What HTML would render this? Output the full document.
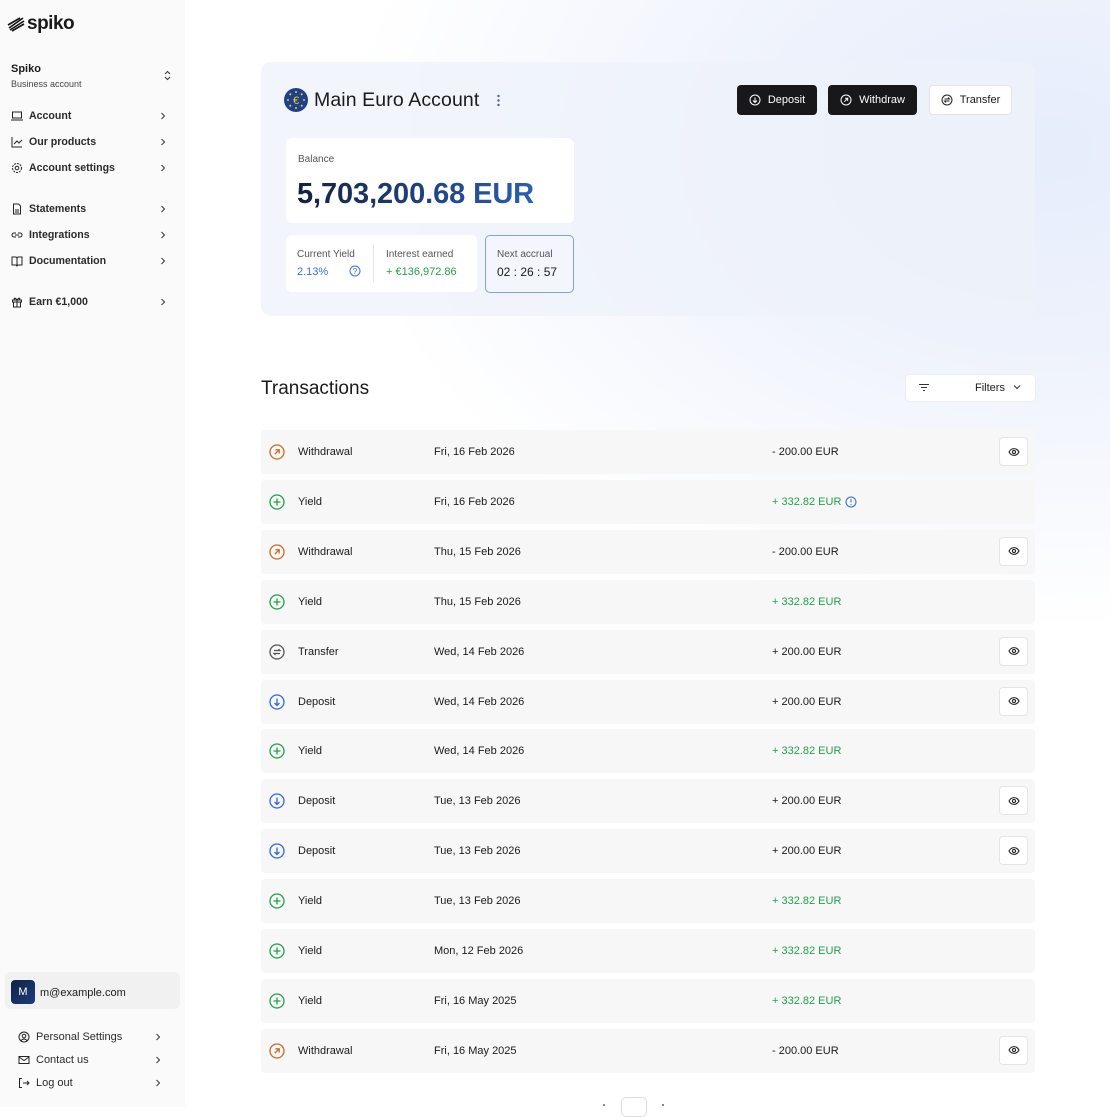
<!DOCTYPE html>
<html><head><meta charset="utf-8"><style>
*{box-sizing:border-box;margin:0;padding:0}
body{width:1110px;height:1107px;overflow:hidden;font-family:"Liberation Sans",sans-serif;color:#1a1a1a;position:relative;background:#fff}
.bg{position:absolute;left:185px;top:0;width:925px;height:1107px;background:radial-gradient(ellipse 700px 480px at 860px 150px,#e6edfb 0%,#eef2fc 40%,rgba(255,255,255,0) 100%)}
.side{position:absolute;left:0;top:0;width:185px;height:1107px;background:#fafafa}
.a{position:absolute}
.nav{position:absolute;left:11px;font-size:10.6px;font-weight:bold;color:#2a2a2a;display:flex;align-items:center;width:162px}
.nav svg{width:12px;height:12px;margin-right:6px}
.nav .ch{margin-left:auto;width:8px;height:8px}
.card{position:absolute;left:261px;top:62px;width:774px;height:254px;background:rgba(238,242,250,.75);border-radius:10px}
.btn{position:absolute;top:85px;height:30px;border-radius:4px;font-size:11px;display:flex;align-items:center;justify-content:center;gap:7px}
.dark{background:#18181b;color:#fff}
.row{position:absolute;left:261px;width:774px;height:44px;background:#f7f7f7;border-radius:4px;font-size:11px}
.row span{position:absolute;top:16px}
.row .ic{position:absolute;left:8px;top:14px}
.eye{position:absolute;left:738px;top:7px;width:29px;height:29px;background:#fff;border:1px solid #e5e5e5;border-radius:4px;display:flex;align-items:center;justify-content:center}
.g{color:#22a04b}
</style></head><body>
<div class="bg"></div>
<div class="side">
 <div class="a" style="left:7px;top:13px;font-size:19px;font-weight:bold;letter-spacing:-.5px;display:flex;align-items:center;gap:2px">
  <svg width="18" height="16" viewBox="0 0 18 16"><path d="M2 12L16 2M1 9L13 2M3 14L17 5M5 15L17 8" stroke="#111" stroke-width="1.6"/></svg>spiko</div>
 <div class="a" style="left:11px;top:63px;font-size:11px;font-weight:bold">Spiko</div>
 <div class="a" style="left:11px;top:79px;font-size:9px;color:#444">Business account</div>
 <svg class="a" style="left:163px;top:70px" width="9" height="11" viewBox="0 0 9 11"><path d="M2 4L4.5 1.5L7 4M2 7L4.5 9.5L7 7" stroke="#333" fill="none"/></svg>
 <div class="nav" style="top:110px"><svg viewBox="0 0 12 12"><rect x="1.5" y="2" width="9" height="6" stroke="#222" fill="none"/><path d="M0 10h12" stroke="#222"/></svg>Account<svg class="ch" viewBox="0 0 8 8"><path d="M2.5 1L5.5 4L2.5 7" stroke="#333" fill="none"/></svg></div>
 <div class="nav" style="top:136px"><svg viewBox="0 0 12 12"><path d="M1 1v10h10M3 8l3-3 2 2 3-3" stroke="#222" fill="none"/></svg>Our products<svg class="ch" viewBox="0 0 8 8"><path d="M2.5 1L5.5 4L2.5 7" stroke="#333" fill="none"/></svg></div>
 <div class="nav" style="top:162px"><svg viewBox="0 0 12 12"><circle cx="6" cy="6" r="4.5" stroke="#222" fill="none" stroke-dasharray="2 1"/><circle cx="6" cy="6" r="1.8" stroke="#222" fill="none"/></svg>Account settings<svg class="ch" viewBox="0 0 8 8"><path d="M2.5 1L5.5 4L2.5 7" stroke="#333" fill="none"/></svg></div>
 <div class="nav" style="top:203px"><svg viewBox="0 0 12 12"><path d="M2.5 1h5l2 2v8h-7z M4 7h4M4 9h4" stroke="#222" fill="none"/></svg>Statements<svg class="ch" viewBox="0 0 8 8"><path d="M2.5 1L5.5 4L2.5 7" stroke="#333" fill="none"/></svg></div>
 <div class="nav" style="top:229px"><svg viewBox="0 0 12 12"><path d="M5 4H3a2 2 0 000 4h2M7 4h2a2 2 0 010 4H7M4 6h4" stroke="#222" fill="none"/></svg>Integrations<svg class="ch" viewBox="0 0 8 8"><path d="M2.5 1L5.5 4L2.5 7" stroke="#333" fill="none"/></svg></div>
 <div class="nav" style="top:255px"><svg viewBox="0 0 12 12"><path d="M1 2h4l1 1 1-1h4v8H7l-1 1-1-1H1zM6 3v8" stroke="#222" fill="none"/></svg>Documentation<svg class="ch" viewBox="0 0 8 8"><path d="M2.5 1L5.5 4L2.5 7" stroke="#333" fill="none"/></svg></div>
 <div class="nav" style="top:296px"><svg viewBox="0 0 12 12"><path d="M1.5 4h9v2h-9zM2.5 6v5h7V6M6 4v7M6 4C4 1 2 2 4 4M6 4c2-3 4-2 2 0" stroke="#222" fill="none"/></svg>Earn €1,000<svg class="ch" viewBox="0 0 8 8"><path d="M2.5 1L5.5 4L2.5 7" stroke="#333" fill="none"/></svg></div>
 <div class="a" style="left:5px;top:972px;width:175px;height:37px;background:#f1f1f2;border-radius:5px"></div>
 <div class="a" style="left:11px;top:980px;width:24px;height:24px;border-radius:4px;background:linear-gradient(135deg,#0f2244,#1c3d7a);color:#fff;font-size:11px;display:flex;align-items:center;justify-content:center">M</div>
 <div class="a" style="left:40px;top:987px;font-size:11px">m@example.com</div>
 <div class="nav" style="left:18px;top:1031px;width:150px;font-weight:normal;font-size:11px"><svg viewBox="0 0 12 12"><circle cx="6" cy="6" r="5" stroke="#222" fill="none"/><circle cx="6" cy="5" r="1.8" stroke="#222" fill="none"/><path d="M3 9.5c2-2 4-2 6 0" stroke="#222" fill="none"/></svg>Personal Settings<svg class="ch" viewBox="0 0 8 8"><path d="M2.5 1L5.5 4L2.5 7" stroke="#333" fill="none"/></svg></div>
 <div class="nav" style="left:18px;top:1054px;width:150px;font-weight:normal;font-size:11px"><svg viewBox="0 0 12 12"><rect x="1" y="2.5" width="10" height="7" stroke="#222" fill="none"/><path d="M1 3l5 3.5L11 3" stroke="#222" fill="none"/></svg>Contact us<svg class="ch" viewBox="0 0 8 8"><path d="M2.5 1L5.5 4L2.5 7" stroke="#333" fill="none"/></svg></div>
 <div class="nav" style="left:18px;top:1077px;width:150px;font-weight:normal;font-size:11px"><svg viewBox="0 0 12 12"><path d="M4 1.5H1.5v9H4M5 6h6M9 4l2 2-2 2" stroke="#222" fill="none"/></svg>Log out<svg class="ch" viewBox="0 0 8 8"><path d="M2.5 1L5.5 4L2.5 7" stroke="#333" fill="none"/></svg></div>
</div>

<div class="card"></div>
<svg class="a" style="left:284px;top:88px" width="24" height="24" viewBox="0 0 24 24"><circle cx="12" cy="12" r="12" fill="#1f3f8f"/><g fill="#f5d000"><circle cx="12" cy="4" r="1"/><circle cx="12" cy="20" r="1"/><circle cx="4" cy="12" r="1"/><circle cx="20" cy="12" r="1"/><circle cx="6.3" cy="6.3" r="1"/><circle cx="17.7" cy="17.7" r="1"/><circle cx="17.7" cy="6.3" r="1"/><circle cx="6.3" cy="17.7" r="1"/></g><text x="12" y="16" font-size="11" text-anchor="middle" fill="#f5d000" font-family="Liberation Sans">€</text></svg>
<div class="a" style="left:314px;top:89px;font-size:19.5px;color:#1a1a1a;letter-spacing:.1px">Main Euro Account</div>
<svg class="a" style="left:496px;top:94px" width="5" height="13"><circle cx="2.5" cy="2" r="1.2" fill="#3a62c4"/><circle cx="2.5" cy="6.5" r="1.2" fill="#3a62c4"/><circle cx="2.5" cy="11" r="1.2" fill="#3a62c4"/></svg>
<div class="btn dark" style="left:737px;width:80px"><svg width="12" height="12" viewBox="0 0 12 12"><circle cx="6" cy="6" r="5" stroke="#fff" fill="none"/><path d="M6 3.5v5M4 6.5l2 2 2-2" stroke="#fff" fill="none"/></svg>Deposit</div>
<div class="btn dark" style="left:828px;width:89px"><svg width="12" height="12" viewBox="0 0 12 12"><circle cx="6" cy="6" r="5" stroke="#fff" fill="none"/><path d="M4.3 7.7l3.4-3.4M5 4.3h2.7V7" stroke="#fff" fill="none"/></svg>Withdraw</div>
<div class="btn" style="left:929px;width:83px;background:#fff;border:1px solid #e4e4e7"><svg width="12" height="12" viewBox="0 0 12 12"><circle cx="6" cy="6" r="5" stroke="#222" fill="none"/><path d="M3.5 5h5L7 3.5M8.5 7h-5L5 8.5" stroke="#222" fill="none"/></svg>Transfer</div>

<div class="a" style="left:286px;top:138px;width:288px;height:85px;background:#fff;border-radius:6px"></div>
<div class="a" style="left:298px;top:154px;font-size:10px;color:#555">Balance</div>
<div class="a" style="left:297px;top:178px;font-size:29px;font-weight:bold;background:linear-gradient(90deg,#13213f,#2a5fb3);-webkit-background-clip:text;color:transparent;letter-spacing:-.1px">5,703,200.68 EUR</div>
<div class="a" style="left:286px;top:235px;width:191px;height:57px;background:#fff;border-radius:6px"></div>
<div class="a" style="left:373px;top:245px;width:1px;height:37px;background:#e5e5e5"></div>
<div class="a" style="left:297px;top:249px;font-size:10px;color:#555">Current Yield</div>
<div class="a" style="left:297px;top:266px;font-size:11px;color:#3a6fd8">2.13%</div>
<svg class="a" style="left:349px;top:265px" width="12" height="12" viewBox="0 0 12 12"><circle cx="6" cy="6" r="5" stroke="#3a6fd8" fill="none"/><text x="6" y="9" font-size="8" text-anchor="middle" fill="#3a6fd8" font-family="Liberation Sans">?</text></svg>
<div class="a" style="left:386px;top:249px;font-size:10px;color:#555">Interest earned</div>
<div class="a g" style="left:386px;top:266px;font-size:11px">+ €136,972.86</div>
<div class="a" style="left:485px;top:235px;width:89px;height:58px;background:#f3f6fc;border:1px solid #8aa2cc;border-radius:5px"></div>
<div class="a" style="left:497px;top:249px;font-size:10px;color:#555">Next accrual</div>
<div class="a" style="left:497px;top:265px;font-size:12px">02 : 26 : 57</div>

<div class="a" style="left:261px;top:378px;font-size:19px">Transactions</div>
<div class="a" style="left:906px;top:375px;width:129px;height:26px;background:#fff;border-radius:4px;box-shadow:0 0 0 1px #eceef2"></div>
<svg class="a" style="left:919px;top:383px" width="10" height="9"><path d="M0 1.5h10M2 4.5h6M4 7.5h2" stroke="#333"/></svg>
<div class="a" style="left:975px;top:382px;font-size:11px">Filters</div>
<svg class="a" style="left:1013px;top:384px" width="8" height="6"><path d="M1 1.5l3 3 3-3" stroke="#333" fill="none"/></svg>

<div id="rows"></div>
<script>
const W='<svg width="16" height="16" viewBox="0 0 16 16"><circle cx="8" cy="8" r="7" stroke="#c96a22" stroke-width="1.3" fill="none"/><path d="M5.8 10.2l4.4-4.4M6.5 5.8h3.7v3.7" stroke="#c96a22" stroke-width="1.3" fill="none"/></svg>';
const Y='<svg width="16" height="16" viewBox="0 0 16 16"><circle cx="8" cy="8" r="7" stroke="#22a04b" stroke-width="1.3" fill="none"/><path d="M8 4.5v7M4.5 8h7" stroke="#22a04b" stroke-width="1.3"/></svg>';
const D='<svg width="16" height="16" viewBox="0 0 16 16"><circle cx="8" cy="8" r="7" stroke="#3566d6" stroke-width="1.3" fill="none"/><path d="M8 4.5v7M5.5 9l2.5 2.5L10.5 9" stroke="#3566d6" stroke-width="1.3" fill="none"/></svg>';
const T='<svg width="16" height="16" viewBox="0 0 16 16"><circle cx="8" cy="8" r="7" stroke="#555" stroke-width="1.3" fill="none"/><path d="M5 6.5h6L9.5 5M11 9.5H5l1.5 1.5" stroke="#555" stroke-width="1.2" fill="none"/></svg>';
const E='<div class="eye"><svg width="12" height="10" viewBox="0 0 12 10"><path d="M1 5c2.5-4.5 7.5-4.5 10 0-2.5 4.5-7.5 4.5-10 0z" stroke="#222" fill="none" stroke-width="1.1"/><circle cx="6" cy="5" r="1.6" stroke="#222" fill="none" stroke-width="1.1"/></svg></div>';
const rows=[[W,'Withdrawal','Fri, 16 Feb 2026','- 200.00 EUR',1,0],[Y,'Yield','Fri, 16 Feb 2026','+ 332.82 EUR',0,1,1],[W,'Withdrawal','Thu, 15 Feb 2026','- 200.00 EUR',1,0],[Y,'Yield','Thu, 15 Feb 2026','+ 332.82 EUR',0,1],[T,'Transfer','Wed, 14 Feb 2026','+ 200.00 EUR',1,0],[D,'Deposit','Wed, 14 Feb 2026','+ 200.00 EUR',1,0],[Y,'Yield','Wed, 14 Feb 2026','+ 332.82 EUR',0,1],[D,'Deposit','Tue, 13 Feb 2026','+ 200.00 EUR',1,0],[D,'Deposit','Tue, 13 Feb 2026','+ 200.00 EUR',1,0],[Y,'Yield','Tue, 13 Feb 2026','+ 332.82 EUR',0,1],[Y,'Yield','Mon, 12 Feb 2026','+ 332.82 EUR',0,1],[Y,'Yield','Fri, 16 May 2025','+ 332.82 EUR',0,1],[W,'Withdrawal','Fri, 16 May 2025','- 200.00 EUR',1,0]];
let h='';rows.forEach((r,i)=>{h+=`<div class="row" style="top:${430+i*49.9}px"><div class="ic">${r[0]}</div><span style="left:37px">${r[1]}</span><span style="left:173px">${r[2]}</span><span style="left:511px" class="${r[5]?'g':''}">${r[3]}</span>${r[6]?'<svg style="position:absolute;left:584px;top:16px" width="12" height="12" viewBox="0 0 12 12"><circle cx="6" cy="6" r="5" stroke="#3566d6" fill="none"/><path d="M6 3v3.5M6 8v1" stroke="#3566d6"/></svg>':''}${r[4]?E:''}</div>`});
document.getElementById('rows').innerHTML=h;
</script>
<div class="a" style="left:621px;top:1097px;width:26px;height:20px;border:1px solid #ddd;border-radius:5px;background:#fff"></div>
<div class="a" style="left:603px;top:1104px;width:2px;height:2px;background:#888"></div>
<div class="a" style="left:662px;top:1104px;width:2px;height:2px;background:#888"></div>
</body></html>
